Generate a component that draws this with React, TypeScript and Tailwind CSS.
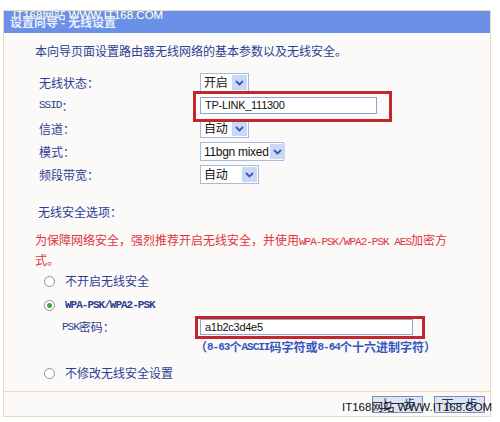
import React from 'react';

const cjk = "font-['Noto_Sans_CJK_SC','Noto_Sans',sans-serif]";
const mono = "font-['Liberation_Mono',monospace] text-[11px] tracking-[-1px]";

const Chevron = () => (
  <svg width="9" height="6" viewBox="0 0 9 6">
    <path d="M1 1 L4.5 4.5 L8 1" fill="none" stroke="#3857b8" strokeWidth="1.8" />
  </svg>
);

// fake <select> in the XP router-page look
const Select = ({ value, width }: { value: string; width: string }) => (
  <div className={`flex h-[19px] items-stretch border border-[#a9bbdc] bg-white ${width}`}>
    <span className="flex flex-1 items-center whitespace-nowrap pl-[3px] text-[12px] leading-none text-[#111] font-['Liberation_Sans','Noto_Sans_CJK_SC',sans-serif] tracking-tight">
      {value}
    </span>
    <span className="m-[1px] flex w-[15px] shrink-0 items-center justify-center bg-[#c9d8f6]">
      <Chevron />
    </span>
  </div>
);

const Row = ({ label, children }: { label: React.ReactNode; children: React.ReactNode }) => (
  <div className="flex h-[23px] items-center">
    <div className="w-[165px] pl-[4px]">{label}</div>
    {children}
  </div>
);

const Radio = ({ checked }: { checked?: boolean }) => (
  <span className="flex h-[11px] w-[11px] items-center justify-center rounded-full border border-[#8593a3] bg-white">
    {checked && <span className="h-[5px] w-[5px] rounded-full bg-[#3fa34a]" />}
  </span>
);

export default function App() {
  return (
    <div className={`relative h-[422px] w-[500px] overflow-hidden bg-white ${cjk}`}>
      <div className="ml-[3px] mt-[10px] flex h-[407px] w-[488px] flex-col border border-[#efd8b9] bg-[#fcf9f9]">
        <div className="flex h-[22px] items-center bg-[#6b90e8] pl-[6px] text-[12px] font-bold text-[#e9efff]">
          设置向导 - 无线设置
        </div>

        <div className="flex-1 pl-[31px] pt-[8px] text-[12px] text-[#2d3f94]">
          <div className="h-[20px] leading-[20px]">本向导页面设置路由器无线网络的基本参数以及无线安全。</div>

          <div className="mt-[10px]">
            <Row label="无线状态：">
              <Select value="开启" width="w-[49px]" />
            </Row>
            <Row label={<span className="flex items-center"><span className={mono}>SSID</span>：</span>}>
              <div className="relative">
                <div className="absolute -bottom-[8px] -left-[7px] -right-[15px] -top-[6px] border-[3px] border-[#c4262d]" />
                <div className="relative flex h-[17px] w-[177px] items-center border border-[#8fa5c8] bg-white pl-[4px] text-[11px] tracking-tight text-[#111] font-['Liberation_Sans',sans-serif]">
                  TP-LINK_111300
                </div>
              </div>
            </Row>
            <Row label="信道：">
              <Select value="自动" width="w-[49px]" />
            </Row>
            <Row label="模式：">
              <Select value="11bgn mixed" width="w-[84px]" />
            </Row>
            <Row label="频段带宽：">
              <Select value="自动" width="w-[59px]" />
            </Row>
          </div>

          <div className="mt-[17px] h-[18px] pl-[3px] leading-[18px]">无线安全选项：</div>
          <div className="mt-[10px] whitespace-nowrap leading-[18px] text-[#e0353c]">
            为保障网络安全，强烈推荐开启无线安全，并使用<span className={mono}>WPA-PSK/WPA2-PSK AES</span>加密方
            <br />
            式。
          </div>

          <div className="flex h-[24px] items-center gap-[10px] pl-[9px]">
            <Radio />
            <span>不开启无线安全</span>
          </div>
          <div className="flex h-[24px] items-center gap-[10px] pl-[9px]">
            <Radio checked />
            <span className={`${mono} font-bold`}>WPA-PSK/WPA2-PSK</span>
          </div>
          <div className="flex h-[20px] items-center">
            <div className="flex w-[165px] items-center pl-[27px]">
              <span className={mono}>PSK</span>密码：
            </div>
            <div className="relative">
              <div className="absolute -bottom-[4px] -left-[5px] -right-[12px] -top-[3px] border-[3px] border-[#c4262d]" />
              <div className="relative flex h-[16px] w-[213px] items-center border border-[#8fa5c8] bg-white pl-[4px] text-[11px] tracking-tight text-[#111] font-['Liberation_Sans',sans-serif]">
                a1b2c3d4e5
              </div>
            </div>
          </div>
          <div className="flex h-[20px] items-center whitespace-nowrap pl-[160px] font-bold text-[#3556bd]">
            （<span className={mono}>8-63</span>个<span className={mono}>ASCII</span>码字符或<span className={mono}>8-64</span>个十六进制字符）
          </div>
          <div className="mt-[6px] flex h-[20px] items-center gap-[10px] pl-[9px]">
            <Radio />
            <span>不修改无线安全设置</span>
          </div>
        </div>

        <div className="flex h-[25px] items-center justify-end gap-[11px] border-t border-[#efd8b9] pr-[5px]">
          {['上一步', '下一步'].map((t) => (
            <button
              key={t}
              className="flex h-[17px] w-[51px] items-center justify-center border border-[#7f8fb4] bg-[#dde4f2] text-[12px] text-[#22306e]"
            >
              {t}
            </button>
          ))}
        </div>
      </div>

      {/* site watermarks */}
      <div className="absolute left-[13px] top-[10px] whitespace-nowrap text-[11.5px] leading-none text-white [text-shadow:0_0_1px_#8aa] font-['Liberation_Sans','Noto_Sans_CJK_SC',sans-serif]">
        IT168网站 WWW.IT168.COM
      </div>
      <div className="absolute left-[342px] top-[402px] whitespace-nowrap text-[11.5px] leading-none text-[#111] font-['Liberation_Sans','Noto_Sans_CJK_SC',sans-serif]">
        IT168网站 WWW.IT168.COM
      </div>
    </div>
  );
}
